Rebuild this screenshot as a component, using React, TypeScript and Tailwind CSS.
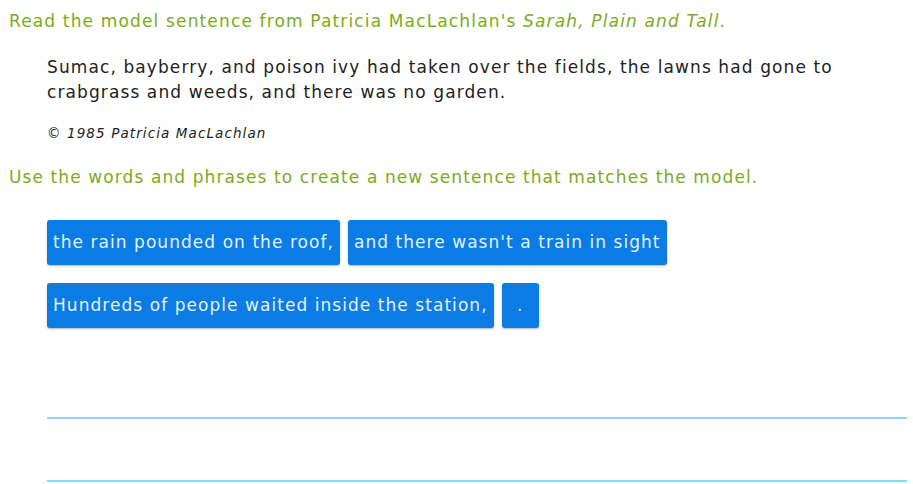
const tiles = [
  ["the rain pounded on the roof,", "and there wasn't a train in sight"],
  ["Hundreds of people waited inside the station,", "."],
];

const App = () => {
  return (
    <div className="w-[913px] h-[484px] bg-white overflow-hidden font-['DejaVu_Sans',sans-serif] tracking-[1.1px]">
      {/* prompt and model sentence */}
      <p className="pl-[9px] pt-[9px] text-[17px] leading-[24px] tracking-[1.15px] text-[#7bab23]">
        Read the model sentence from Patricia MacLachlan's <i>Sarah, Plain and Tall</i>.
      </p>
      <div className="pl-[47px] pr-[60px] pt-[22px]">
        <p className="text-[17px] leading-[25px] text-[#222]">
          Sumac, bayberry, and poison ivy had taken over the fields, the lawns had gone to crabgrass and weeds, and there was no garden.
        </p>
        <p className="mt-[19px] text-[13.5px] leading-[18px] italic text-[#222]">© 1985 Patricia MacLachlan</p>
      </div>
      <p className="pl-[9px] pt-[23px] text-[17px] leading-[24px] text-[#7bab23]">
        Use the words and phrases to create a new sentence that matches the model.
      </p>

      {/* word tiles */}
      <div className="pl-[47px] pt-[31px] flex flex-col gap-[18px]">
        {tiles.map((row, i) => (
          <div key={i} className="flex gap-[8px]">
            {row.map((t) => (
              <div
                key={t}
                className="h-[45px] min-w-[37px] px-[6px] flex items-center justify-center rounded-[3px] bg-[#0a7ce3] text-[#e6f0fb] text-[17px] tracking-[1.05px] shadow-[0_1px_2px_rgba(0,0,0,0.3)]"
              >
                {t}
              </div>
            ))}
          </div>
        ))}
      </div>

      {/* answer lines */}
      <div className="pl-[47px] pr-[6px] pt-[89px] flex flex-col gap-[61px]">
        <div className="h-[2px] bg-[#8ad7f5]" />
        <div className="h-[2px] bg-[#8ad7f5]" />
      </div>
    </div>
  );
};

export default App;
